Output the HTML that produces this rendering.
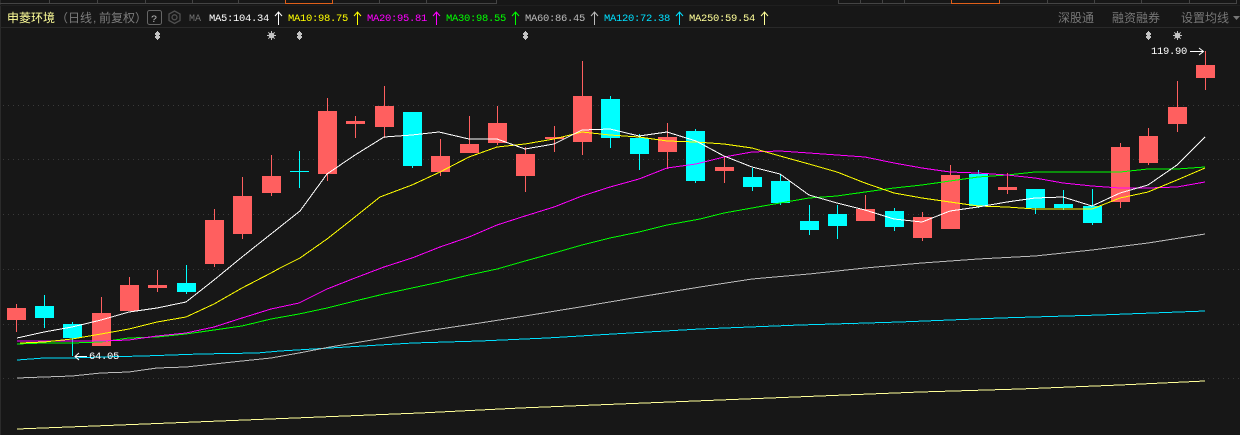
<!DOCTYPE html>
<html>
<head>
<meta charset="utf-8">
<style>
html,body{margin:0;padding:0;width:1240px;height:435px;background:#171717;overflow:hidden}
svg{display:block;position:absolute;left:0;top:0}
.m{font-family:"Liberation Mono","DejaVu Sans Mono",monospace;font-size:10.5px;letter-spacing:-.3px}
.c{font-family:"Liberation Sans","WenQuanYi Zen Hei","Noto Sans CJK SC",sans-serif;font-size:12px}
</style>
</head>
<body>
<svg width="1240" height="435" viewBox="0 0 1240 435" xmlns="http://www.w3.org/2000/svg">
<rect width="1240" height="435" fill="#171717"/>
<g shape-rendering="crispEdges">
<rect x="0" y="0" width="1" height="435" fill="#2b2b2b"/>
<rect x="0" y="5" width="1240" height="1" fill="#1f1f1f"/>
<rect x="0" y="27" width="1240" height="1" fill="#292929"/>
<g fill="#444">
<rect x="0" y="3" width="497" height="1"/><rect x="838" y="3" width="399" height="1"/>
<rect x="49" y="0" width="1" height="4"/><rect x="97" y="0" width="1" height="4"/><rect x="145" y="0" width="1" height="4"/><rect x="192" y="0" width="1" height="4"/><rect x="238" y="0" width="1" height="4"/><rect x="379" y="0" width="1" height="4"/><rect x="426" y="0" width="1" height="4"/><rect x="496" y="0" width="1" height="4"/>
<rect x="838" y="0" width="1" height="4"/><rect x="860" y="0" width="1" height="4"/><rect x="882" y="0" width="1" height="4"/><rect x="904" y="0" width="1" height="4"/><rect x="1047" y="0" width="1" height="4"/><rect x="1094" y="0" width="1" height="4"/><rect x="1141" y="0" width="1" height="4"/><rect x="1189" y="0" width="1" height="4"/><rect x="1236" y="0" width="1" height="4"/>
</g>
<path d="M285.5 0V3.5H332.5V0M951.5 0V3.5H999.5V0" fill="none" stroke="#e0601a"/>
<g stroke="#3a3a3a" stroke-dasharray="1 4" fill="none">
<path d="M3 105.500H1240M3 159.500H1240M3 214.500H1240M3 269.500H1240M3 324.500H1240M3 378.500H1240"/>
</g>
</g>

<g shape-rendering="crispEdges" fill="#ff5f5f">
<rect x="16" y="304" width="1" height="28"/><rect x="7" y="308" width="19" height="12"/>
<rect x="101" y="297" width="1" height="49"/><rect x="92" y="313" width="19" height="33"/>
<rect x="129" y="277" width="1" height="34"/><rect x="120" y="285" width="19" height="26"/>
<rect x="157" y="270" width="1" height="22"/><rect x="148" y="285" width="19" height="3"/>
<rect x="214" y="209" width="1" height="58"/><rect x="205" y="220" width="19" height="44"/>
<rect x="242" y="177" width="1" height="62"/><rect x="233" y="196" width="19" height="38"/>
<rect x="271" y="155" width="1" height="41"/><rect x="262" y="176" width="19" height="17"/>
<rect x="327" y="98" width="1" height="83"/><rect x="318" y="111" width="19" height="63"/>
<rect x="355" y="116" width="1" height="22"/><rect x="346" y="121" width="19" height="3"/>
<rect x="384" y="86" width="1" height="52"/><rect x="375" y="106" width="19" height="21"/>
<rect x="440" y="139" width="1" height="37"/><rect x="431" y="156" width="19" height="16"/>
<rect x="469" y="116" width="1" height="37"/><rect x="460" y="144" width="19" height="9"/>
<rect x="497" y="106" width="1" height="39"/><rect x="488" y="123" width="19" height="20"/>
<rect x="525" y="147" width="1" height="45"/><rect x="516" y="154" width="19" height="22"/>
<rect x="554" y="126" width="1" height="26"/><rect x="545" y="137" width="19" height="2"/>
<rect x="582" y="61" width="1" height="94"/><rect x="573" y="96" width="19" height="46"/>
<rect x="667" y="123" width="1" height="46"/><rect x="658" y="137" width="19" height="15"/>
<rect x="724" y="156" width="1" height="27"/><rect x="715" y="167" width="19" height="4"/>
<rect x="865" y="195" width="1" height="26"/><rect x="856" y="209" width="19" height="12"/>
<rect x="922" y="212" width="1" height="29"/><rect x="913" y="217" width="19" height="21"/>
<rect x="950" y="165" width="1" height="64"/><rect x="941" y="175" width="19" height="54"/>
<rect x="1007" y="173" width="1" height="21"/><rect x="998" y="187" width="19" height="3"/>
<rect x="1120" y="143" width="1" height="65"/><rect x="1111" y="147" width="19" height="55"/>
<rect x="1148" y="128" width="1" height="37"/><rect x="1139" y="136" width="19" height="27"/>
<rect x="1177" y="81" width="1" height="51"/><rect x="1168" y="107" width="19" height="17"/>
<rect x="1205" y="51" width="1" height="39"/><rect x="1196" y="65" width="19" height="13"/>
</g>
<g shape-rendering="crispEdges" fill="#00ffff">
<rect x="44" y="295" width="1" height="33"/><rect x="35" y="306" width="19" height="12"/>
<rect x="72" y="322" width="1" height="34"/><rect x="63" y="324" width="19" height="14"/>
<rect x="186" y="265" width="1" height="29"/><rect x="177" y="283" width="19" height="9"/>
<rect x="299" y="151" width="1" height="37"/><rect x="290" y="171" width="19" height="1"/>
<rect x="412" y="112" width="1" height="56"/><rect x="403" y="112" width="19" height="54"/>
<rect x="610" y="96" width="1" height="52"/><rect x="601" y="99" width="19" height="39"/>
<rect x="639" y="134" width="1" height="36"/><rect x="630" y="138" width="19" height="16"/>
<rect x="695" y="129" width="1" height="54"/><rect x="686" y="131" width="19" height="50"/>
<rect x="752" y="168" width="1" height="23"/><rect x="743" y="177" width="19" height="10"/>
<rect x="780" y="174" width="1" height="31"/><rect x="771" y="181" width="19" height="22"/>
<rect x="809" y="205" width="1" height="30"/><rect x="800" y="221" width="19" height="9"/>
<rect x="837" y="205" width="1" height="34"/><rect x="828" y="214" width="19" height="12"/>
<rect x="894" y="208" width="1" height="23"/><rect x="885" y="211" width="19" height="16"/>
<rect x="978" y="170" width="1" height="38"/><rect x="969" y="174" width="19" height="32"/>
<rect x="1035" y="189" width="1" height="25"/><rect x="1026" y="189" width="19" height="19"/>
<rect x="1063" y="190" width="1" height="20"/><rect x="1054" y="204" width="19" height="4"/>
<rect x="1092" y="189" width="1" height="36"/><rect x="1083" y="206" width="19" height="17"/>
</g>

<g fill="none" stroke-width="1" shape-rendering="crispEdges">
<polyline stroke="#ffff99" points="17,429 120,425 220,421 320,417 420,413 520,408 620,404 720,400 820,396 920,392 1020,389 1120,385 1205,381"/>
<polyline stroke="#00e0ff" points="17,360 44,358 72,358 101,357 143,356 200,354 257,353 280,351 330,348 413,343 480,341 547,338 613,334 700,329 800,325 900,322 1000,318 1100,315 1205,311"/>
<polyline stroke="#bbbbbb" points="17,378 44,377 72,376 101,373 129,372 157,368 186,367 214,364 242,361 271,358 299,353 330,347 384,338 420,332 480,323 525,316 580,307 639,297 700,287 752,279 809,274 865,268 922,263 978,259 1035,256 1092,250 1148,243 1205,234"/>
<polyline stroke="#00ff00" points="17,344 44,343 72,343 101,342 129,338 157,337 186,334 214,330 242,326 271,319 299,314 327,308 355,301 384,294 412,288 440,282 469,275 497,269 525,261 554,253 582,245 610,238 639,232 667,225 700,219 724,213 752,208 780,203 809,198 837,196 865,192 894,188 922,185 950,181 978,177 1007,175 1035,172 1063,172 1092,172 1120,172 1148,169 1177,169 1205,167"/>
<polyline stroke="#ff00ff" points="17,341 44,341 72,341 101,341 129,340 157,336 186,333 214,327 242,318 271,309 299,303 327,289 355,278 384,267 412,258 440,247 469,237 497,225 525,216 554,207 582,196 610,187 639,179 667,168 696,164 724,157 752,152 780,151 809,153 837,155 865,157 894,163 922,168 950,172 978,173 1007,175 1035,178 1063,183 1092,186 1120,188 1148,188 1177,187 1205,182"/>
<polyline stroke="#ffff00" points="20,343 44,342 72,339 101,334 129,329 157,322 186,317 214,304 242,288 271,273 280,268 300,258 327,239 355,217 380,197 412,185 440,172 469,157 497,147 525,144 554,139 582,132 610,135 639,137 667,141 696,142 724,144 752,148 780,156 809,164 837,172 865,183 894,193 922,198 950,202 978,206 1007,207 1035,209 1063,209 1092,209 1120,198 1148,192 1177,180 1205,168"/>
<polyline stroke="#ffffff" points="17,338 44,332 72,327 101,320 129,312 157,308 186,302 214,280 242,257 271,234 300,211 327,174 355,155 384,137 412,135 439,132 469,139 497,139 525,149 554,144 582,130 610,129 639,136 667,132 696,141 724,156 752,167 780,174 809,195 837,203 865,210 894,219 922,222 950,211 978,207 1007,202 1035,198 1063,197 1092,206 1120,193 1148,185 1177,165 1205,137"/>
</g>

<text x="7" y="22" class="c" fill="#ffff99" style="font-size:12px">申菱环境</text>
<text x="56" y="22" class="c" fill="#7c7c7c" style="font-size:12px">（</text>
<text x="68" y="22" class="c" fill="#7c7c7c" style="font-size:12px">日线</text>
<text x="93" y="22" class="c" fill="#7c7c7c" style="font-size:12px">,</text>
<text x="99" y="22" class="c" fill="#7c7c7c" style="font-size:12px">前复权</text>
<text x="135" y="22" class="c" fill="#7c7c7c" style="font-size:12px">）</text>
<rect x="147.500" y="10.500" width="14" height="14" rx="2" fill="none" stroke="#666"/>
<text x="151" y="22" class="m" fill="#bbb">?</text>
<path d="M174.500 11L180 14V20.500L174.500 23.500L169 20.500V14Z" fill="none" stroke="#505050" stroke-width="1.300"/>
<circle cx="174.500" cy="17.300" r="2.500" fill="none" stroke="#505050" stroke-width="1.300"/>
<text x="189" y="21" class="m" fill="#707070" style="font-size:10px;letter-spacing:0">MA</text>

<text x="209" y="21" class="m" fill="#ffffff">MA5:104.34</text>
<path d="M278.500 25V12M275 16L278.500 12L282 16" fill="none" stroke="#ffffff"/>
<text x="288" y="21" class="m" fill="#ffff00">MA10:98.75</text>
<path d="M357.500 25V12M354 16L357.500 12L361 16" fill="none" stroke="#ffff00"/>
<text x="367" y="21" class="m" fill="#ff00ff">MA20:95.81</text>
<path d="M436.500 25V12M433 16L436.500 12L440 16" fill="none" stroke="#ff00ff"/>
<text x="446" y="21" class="m" fill="#00ff00">MA30:98.55</text>
<path d="M515.500 25V12M512 16L515.500 12L519 16" fill="none" stroke="#00ff00"/>
<text x="525" y="21" class="m" fill="#bbbbbb">MA60:86.45</text>
<path d="M594.500 25V12M591 16L594.500 12L598 16" fill="none" stroke="#bbbbbb"/>
<text x="604" y="21" class="m" fill="#00e0ff">MA120:72.38</text>
<path d="M679.500 25V12M676 16L679.500 12L683 16" fill="none" stroke="#00e0ff"/>
<text x="689" y="21" class="m" fill="#ffff99">MA250:59.54</text>
<path d="M764.500 25V12M761 16L764.500 12L768 16" fill="none" stroke="#ffff99"/>

<text x="1058" y="22" class="c" fill="#777" style="font-size:12px">深股通</text>
<text x="1112" y="22" class="c" fill="#777" style="font-size:12px">融资融券</text>
<text x="1181" y="22" class="c" fill="#777" style="font-size:12px">设置均线</text>
<path d="M1233 16H1240L1236.500 20Z" fill="#777"/>

<g fill="#c4c4c4" shape-rendering="crispEdges">
<path d="M157 31H158V32H159V33H160V35H159V36H160V38H159V39H158V40H157V39H156V38H155V36H156V35H155V33H156V32H157Z"/>
<path d="M299 31H300V32H301V33H302V35H301V36H302V38H301V39H300V40H299V39H298V38H297V36H298V35H297V33H298V32H299Z"/>
<path d="M525 31H526V32H527V33H528V35H527V36H528V38H527V39H526V40H525V39H524V38H523V36H524V35H523V33H524V32H525Z"/>
<path d="M1148 31H1149V32H1150V33H1151V35H1150V36H1151V38H1150V39H1149V40H1148V39H1147V38H1146V36H1147V35H1146V33H1147V32H1148Z"/>
</g>
<g fill="#c4c4c4">
<circle cx="271.500" cy="35.500" r="2.800"/>
<circle cx="1177.500" cy="35.500" r="2.800"/>
</g>
<path d="M267 35.500H276M271.500 31V40M268.300 32.300L274.700 38.700M274.700 32.300L268.300 38.700M1173 35.500H1182M1177.500 31V40M1174.300 32.300L1180.700 38.700M1180.700 32.300L1174.300 38.700" stroke="#c4c4c4" fill="none"/>

<text x="1151" y="54" class="m" fill="#ffffff">119.90</text>
<path d="M1190 51.500H1203M1199 48L1203.500 51.500L1199 55" fill="none" stroke="#ffffff"/>
<text x="89" y="359" class="m" fill="#ffffff">64.05</text>
<path d="M87 356.500H75M79 353L75 356.500L79 360" fill="none" stroke="#ffffff"/>
</svg>
</body>
</html>
